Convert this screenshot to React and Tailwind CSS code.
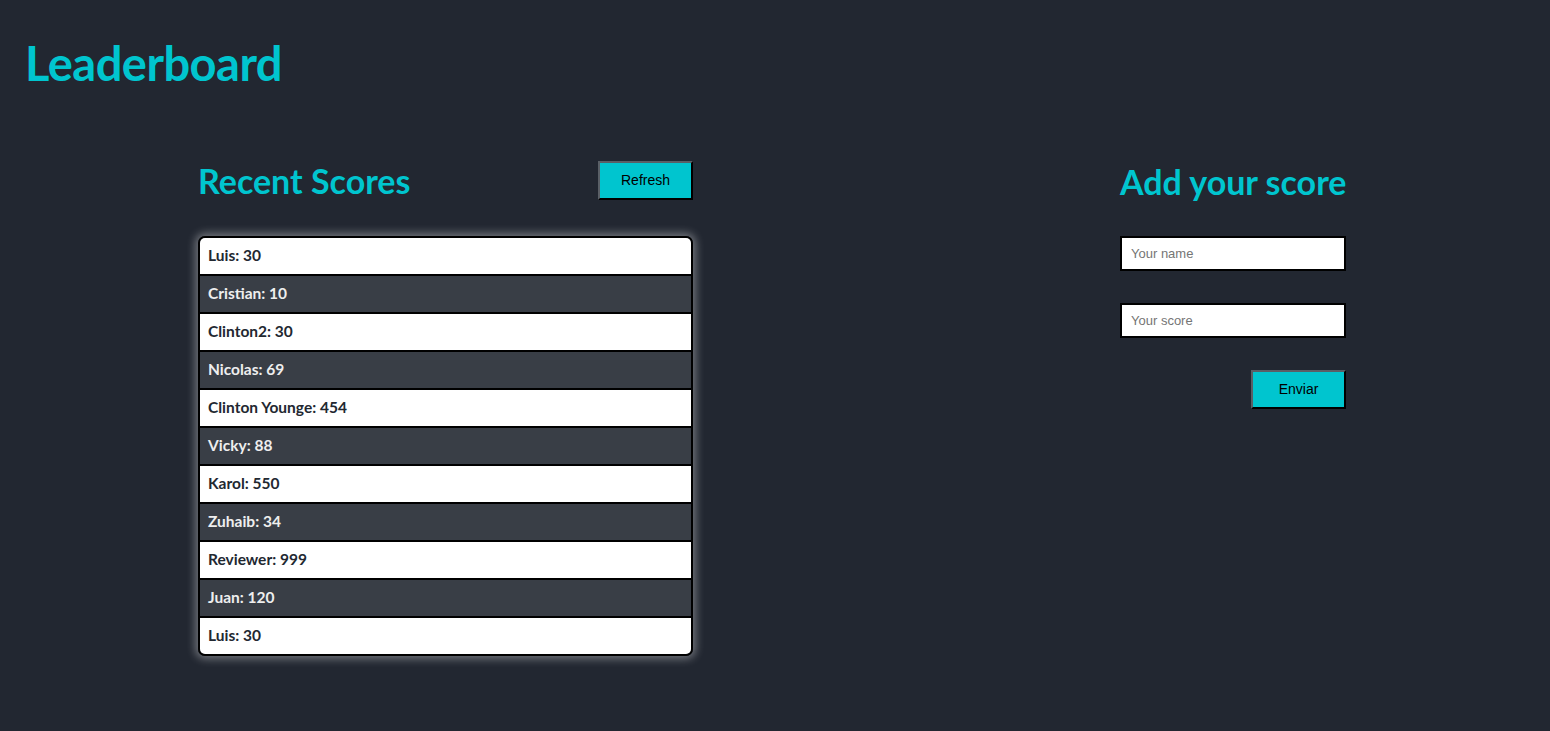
const scores = [
  { name: 'Luis', score: 30 },
  { name: 'Cristian', score: 10 },
  { name: 'Clinton2', score: 30 },
  { name: 'Nicolas', score: 69 },
  { name: 'Clinton Younge', score: 454 },
  { name: 'Vicky', score: 88 },
  { name: 'Karol', score: 550 },
  { name: 'Zuhaib', score: 34 },
  { name: 'Reviewer', score: 999 },
  { name: 'Juan', score: 120 },
  { name: 'Luis', score: 30 },
];

const heading = "font-['Lato',sans-serif] font-bold text-[#00c5cf] whitespace-nowrap";
const btn =
  "h-[39px] w-[95px] border-2 border-t-[#5a5f66] border-l-[#5a5f66] border-b-black border-r-black bg-[#00c5cf] font-['Liberation_Sans',sans-serif] text-[14px] text-black";
const field =
  "h-[35px] w-full border-2 border-black bg-white px-[9px] font-['Liberation_Sans',sans-serif] text-[13px] text-black outline-none placeholder:text-[#757575]";

export default function App() {
  return (
    <div className="min-h-[731px] bg-[#222731] font-['Lato',sans-serif]">
      {/* Header */}
      <header className="pl-[25px] pt-[34px]">
        <h1 className={`${heading} text-[47px] leading-[58px] tracking-[-0.5px]`}>Leaderboard</h1>
      </header>

      <main className="flex justify-between pl-[198px] pr-[204px] pt-[69px]">
        {/* Recent scores */}
        <section className="w-[495px]">
          <div className="flex h-[39px] items-center justify-between">
            <h2 className={`${heading} text-[34px] leading-none`}>Recent Scores</h2>
            <button className={btn}>Refresh</button>
          </div>

          <ul className="mt-[36px] overflow-hidden rounded-[7px] border-2 border-black shadow-[0_0_8px_3px_rgba(255,255,255,0.35)]">
            {scores.map((s, i) => (
              <li
                key={i}
                className={`flex items-center px-[8px] text-[15.5px] font-bold ${
                  i > 0 ? 'h-[38px] border-t-2 border-black' : 'h-[36px]'
                } ${i % 2 === 0 ? 'bg-white text-[#222831]' : 'bg-[#393e46] text-[#eeeeee]'}`}
              >
                {s.name}: {s.score}
              </li>
            ))}
          </ul>
        </section>

        {/* Add score */}
        <section className="flex w-[226px] flex-col">
          <div className="flex h-[41px] items-center">
            <h2 className={`${heading} text-[34px] leading-none`}>Add your score</h2>
          </div>
          <input placeholder="Your name" className={`mt-[34px] ${field}`} />
          <input placeholder="Your score" className={`mt-[32px] ${field}`} />
          <button className={`mt-[32px] self-end ${btn}`}>Enviar</button>
        </section>
      </main>
    </div>
  );
}
